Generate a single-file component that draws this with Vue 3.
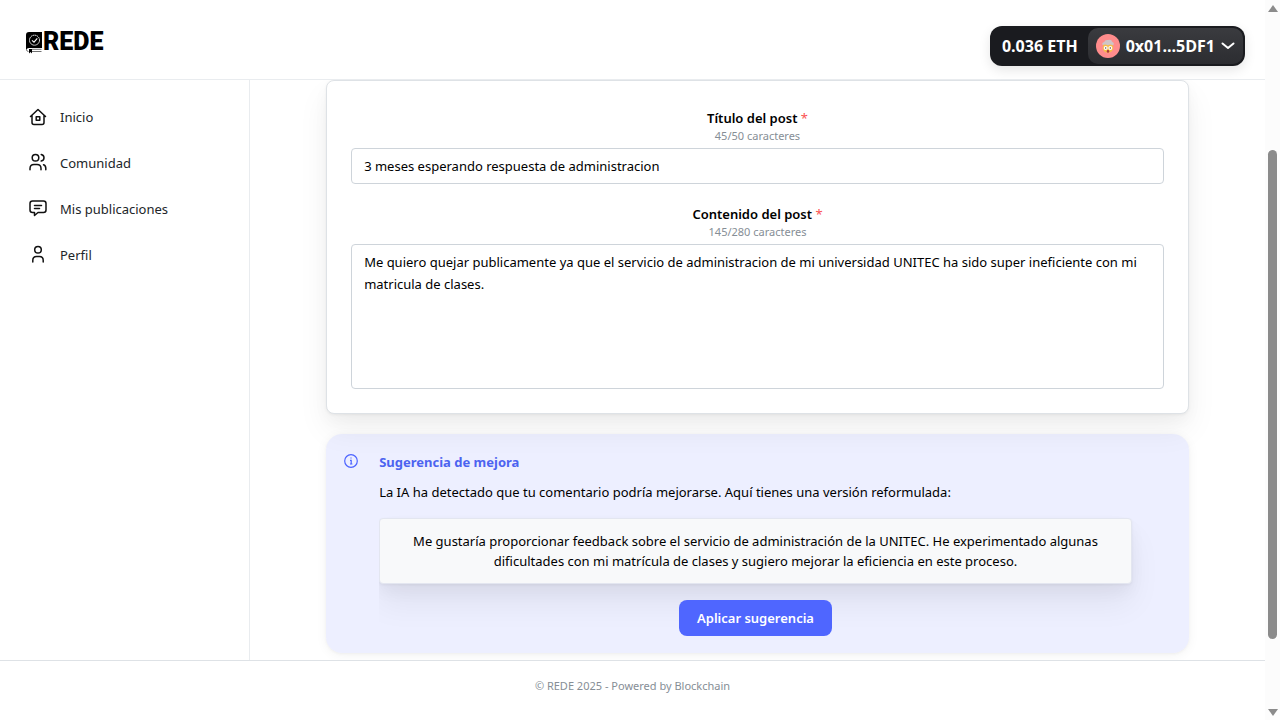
<script setup>
import { ref } from 'vue'

const title = ref('3 meses esperando respuesta de administracion')
const content = ref('Me quiero quejar publicamente ya que el servicio de administracion de mi universidad UNITEC ha sido super ineficiente con mi matricula de clases.')
const links = [
  { id: 'home', label: 'Inicio' },
  { id: 'community', label: 'Comunidad' },
  { id: 'posts', label: 'Mis publicaciones' },
  { id: 'profile', label: 'Perfil' },
]
</script>

<template>
  <div class="shell">
    <div class="page">
      <header class="topbar">
        <a class="brand" href="#" aria-label="REDE">
          <svg class="brand-mark" viewBox="0 0 16 22" aria-hidden="true">
            <path d="M3 0H16V16H3Q1 16 0 18V3Q0 0 3 0Z" fill="#000" />
            <circle cx="8.5" cy="8.2" r="5" fill="none" stroke="#fff" stroke-width="1" stroke-dasharray="1.6 .5" />
            <path d="M6 8.4 8 10.2 11.3 6.4" fill="none" stroke="#fff" stroke-width="1.1" />
            <path d="M.4 17.5Q.6 19.5 2.5 19.5M6 19.5H15.5M6 17.3H15.5" fill="none" stroke="#333" stroke-width=".7" />
            <path d="M3 17H6V21.5L4.5 20 3 21.5Z" fill="#000" />
          </svg>
          <span class="brand-name">REDE</span>
        </a>
        <div class="wallet">
          <span class="balance">0.036 ETH</span>
          <button class="account" type="button">
            <svg class="avatar" viewBox="0 0 24 24" aria-hidden="true">
              <circle cx="12" cy="12" r="12" fill="#ff8c8c" />
              <circle cx="12" cy="13.5" r="5.3" fill="#f6bd4b" />
              <path d="M6.500 11Q5.500 8.500 8.200 8Q9 5.500 12 6Q15.500 5 16.300 8Q18.800 9 17.200 11.300L14 10.500 12 11.200 9.500 10.500Z" fill="#cfc4c6" />
              <circle cx="9.700" cy="14" r="2" fill="#fff" />
              <circle cx="14.300" cy="14" r="2" fill="#fff" />
              <circle cx="9.700" cy="14" r=".7" fill="#5b3b2a" />
              <circle cx="14.300" cy="14" r=".7" fill="#5b3b2a" />
              <ellipse cx="12" cy="17.300" rx="1.200" ry="1.500" fill="#a8383c" />
            </svg>
            <span>0x01...5DF1</span>
            <svg class="chevron" viewBox="0 0 14 8" aria-hidden="true">
              <path d="M1.500 1.500 7 6 12.500 1.500" />
            </svg>
          </button>
        </div>
      </header>

      <div class="body">
        <nav class="sidebar">
          <a v-for="link in links" :key="link.id" class="nav-link" href="#">
            <svg class="nav-icon" viewBox="0 0 20 20" aria-hidden="true">
              <template v-if="link.id === 'home'">
                <path d="M2.500 9.500 10 2.500 17.500 9.500M4 8.500V15.500Q4 17.500 6 17.500H14Q16 17.500 16 15.500V8.500" />
                <rect x="8.200" y="9.700" width="3.600" height="3.600" />
              </template>
              <template v-else-if="link.id === 'community'">
                <circle cx="7.500" cy="4.800" r="3.300" />
                <path d="M2 16.800V15.500Q2 11.500 6 11.500H9Q13 11.500 13 15.500V16.800M13.200 1.500Q16 2.100 16 4.800T13.200 8.100M15.500 11.700Q17.800 12.300 17.800 15.300V16.800" />
              </template>
              <template v-else-if="link.id === 'posts'">
                <path d="M4.500 2H15.500Q18 2 18 4.500V11Q18 13.500 15.500 13.500H10L6.500 16.500V13.500H4.500Q2 13.500 2 11V4.500Q2 2 4.500 2ZM6.500 6.500H13.500M6.500 9.500H11.500" />
              </template>
              <template v-else>
                <circle cx="10" cy="4.800" r="3.300" />
                <path d="M4.800 17V15.300Q4.800 11.500 8.500 11.500H11.500Q15.200 11.500 15.200 15.300V17" />
              </template>
            </svg>
            <span>{{ link.label }}</span>
          </a>
        </nav>

        <main class="content">
          <form class="card" @submit.prevent>
            <div class="field">
              <label for="post-title">Título del post <span class="required">*</span></label>
              <span class="count">45/50 caracteres</span>
              <input id="post-title" v-model="title" type="text" maxlength="50" />
            </div>
            <div class="field">
              <label for="post-content">Contenido del post <span class="required">*</span></label>
              <span class="count">145/280 caracteres</span>
              <textarea id="post-content" v-model="content" maxlength="280"></textarea>
            </div>
          </form>

          <section class="hint">
            <svg class="hint-icon" viewBox="0 0 16 16" aria-hidden="true">
              <circle cx="8" cy="8" r="6.300" />
              <path d="M7 7.300H8.200V11M7 11H9.400M8 4.500V5.500" />
            </svg>
            <div class="hint-body">
              <h2>Sugerencia de mejora</h2>
              <p class="lead">La IA ha detectado que tu comentario podría mejorarse. Aquí tienes una versión reformulada:</p>
              <blockquote>Me gustaría proporcionar feedback sobre el servicio de administración de la UNITEC. He experimentado algunas dificultades con mi matrícula de clases y sugiero mejorar la eficiencia en este proceso.</blockquote>
              <button class="apply" type="button">Aplicar sugerencia</button>
            </div>
          </section>
        </main>
      </div>

      <footer class="footer">© REDE 2025 - Powered by Blockchain</footer>
    </div>

    <div class="scrollbar" aria-hidden="true">
      <svg class="arrow" viewBox="0 0 10 7"><path d="M5 0 10 7H0Z" /></svg>
      <div class="track"><div class="thumb"></div></div>
      <svg class="arrow" viewBox="0 0 10 7"><path d="M0 0H10L5 7Z" /></svg>
    </div>
  </div>
</template>

<style>
body {
  margin: 0;
  background: #fff;
}
</style>

<style scoped>
.shell,
.shell * {
  box-sizing: border-box;
}
.shell {
  display: flex;
  height: 100vh;
  overflow: hidden;
  font-family: "Noto Sans", "Open Sans", sans-serif;
  font-size: 13px;
  line-height: 20px;
  color: #000;
}
.page {
  flex: 1;
  min-width: 0;
  display: flex;
  flex-direction: column;
}
.topbar {
  flex: none;
  display: flex;
  justify-content: space-between;
  align-items: center;
  height: 80px;
  padding: 12px 20px 0 26px;
  border-bottom: 1px solid #e9ecef;
}
.brand {
  display: flex;
  align-items: flex-start;
  gap: 1px;
  padding-bottom: 6px;
  color: #000;
  text-decoration: none;
}
.brand-mark {
  width: 16px;
  height: 22px;
}
.brand-name {
  font-family: Roboto, sans-serif;
  font-size: 25px;
  font-weight: 900;
  line-height: 20px;
}
.wallet {
  display: flex;
  align-items: center;
  height: 40px;
  padding: 2px;
  border-radius: 12px;
  background: #1a1b1f;
  color: #fff;
  font-family: "Open Sans", sans-serif;
  font-size: 16px;
  font-weight: 700;
  box-shadow: 0 4px 12px rgba(0, 0, 0, 0.1);
}
.balance {
  padding: 0 10px;
}
.account {
  display: flex;
  align-items: center;
  gap: 6px;
  height: 36px;
  padding: 0 8px;
  border: 0;
  border-radius: 10px;
  background: linear-gradient(#3a3b3f, #2c2d31);
  color: inherit;
  font: inherit;
}
.avatar {
  width: 24px;
  height: 24px;
}
.chevron {
  width: 14px;
  height: 8px;
  fill: none;
  stroke: #fff;
  stroke-width: 2;
  stroke-linecap: round;
  stroke-linejoin: round;
}
.body {
  flex: 1;
  min-height: 0;
  display: flex;
}
.sidebar {
  flex: none;
  width: 250px;
  padding: 15px 16px;
  border-right: 1px solid #e9ecef;
}
.nav-link {
  display: flex;
  align-items: center;
  gap: 12px;
  height: 44px;
  margin-bottom: 2px;
  padding: 0 12px;
  color: #212529;
  text-decoration: none;
}
.nav-icon {
  width: 20px;
  height: 20px;
  fill: none;
  stroke: #111;
  stroke-width: 1.500;
  stroke-linecap: round;
  stroke-linejoin: round;
}
.content {
  flex: 1;
  min-width: 0;
  overflow: hidden;
}
.card,
.hint {
  width: 85%;
  margin: 0 auto;
}
.card {
  padding: 27px 24px 24px;
  border: 1px solid #dee2e6;
  border-radius: 8px;
  background: #fff;
  box-shadow: 0 1px 3px rgba(0, 0, 0, 0.05), 0 16px 32px rgba(0, 0, 0, 0.06), 0 6px 16px rgba(0, 0, 0, 0.03);
}
.field {
  display: flex;
  flex-direction: column;
  align-items: center;
}
.field + .field {
  margin-top: 20px;
}
.field label {
  font-weight: 600;
}
.required {
  color: #fa5252;
  font-weight: 400;
}
.count {
  margin-bottom: 4px;
  color: #868e96;
  font-size: 11px;
  line-height: 16px;
}
input,
textarea {
  display: block;
  width: 100%;
  margin: 0;
  padding: 0 12px;
  border: 1px solid #ced4da;
  border-radius: 4px;
  background: #fff;
  color: #000;
  font: inherit;
}
input {
  height: 36px;
}
textarea {
  height: 145px;
  padding-top: 6px;
  line-height: 22px;
  resize: none;
  overflow: hidden;
}
.hint {
  display: flex;
  gap: 20px;
  margin-top: 20px;
  padding: 18px 16px 17px 17px;
  border-radius: 16px;
  background: rgba(76, 99, 255, 0.1);
  box-shadow: 0 1px 3px rgba(0, 0, 0, 0.04), 0 2px 12px rgba(0, 0, 0, 0.05);
}
.hint-icon {
  flex: none;
  width: 16px;
  height: 16px;
  margin-top: 1px;
  fill: none;
  stroke: #4c63ff;
  stroke-width: 1.200;
}
.hint-body {
  flex: 1;
  min-width: 0;
  padding-right: 41px;
  overflow: hidden;
}
h2 {
  margin: 0 0 10px;
  color: #4c63f0;
  font-size: 13px;
  font-weight: 700;
  line-height: 20px;
}
.lead {
  margin: 0 0 16px;
}
blockquote {
  margin: 0;
  padding: 12px 16px;
  border: 1px solid #e3e6f0;
  border-radius: 4px;
  background: #f8f9fa;
  text-align: center;
  box-shadow: 0 1px 3px rgba(0, 0, 0, 0.05), 0 20px 32px rgba(0, 0, 0, 0.06), 0 8px 16px rgba(0, 0, 0, 0.04);
}
.apply {
  display: block;
  height: 36px;
  margin: 16px auto 0;
  padding: 0 18px;
  border: 0;
  border-radius: 8px;
  background: #4f66ff;
  color: #fff;
  font: inherit;
  font-weight: 600;
}
.footer {
  flex: none;
  height: 60px;
  padding-top: 15px;
  border-top: 1px solid #dee2e6;
  color: #868e96;
  font-size: 11px;
  text-align: center;
}
.scrollbar {
  flex: none;
  display: flex;
  flex-direction: column;
  align-items: center;
  width: 15px;
  padding: 5px 0 4px;
  background: #fcfcfc;
}
.arrow {
  width: 10px;
  height: 7px;
  fill: #8b8b8b;
}
.track {
  flex: 1;
  width: 9px;
  padding-top: 138px;
}
.thumb {
  height: calc(100% - 70px);
  border-radius: 5px;
  background: #8b8b8b;
}
</style>
